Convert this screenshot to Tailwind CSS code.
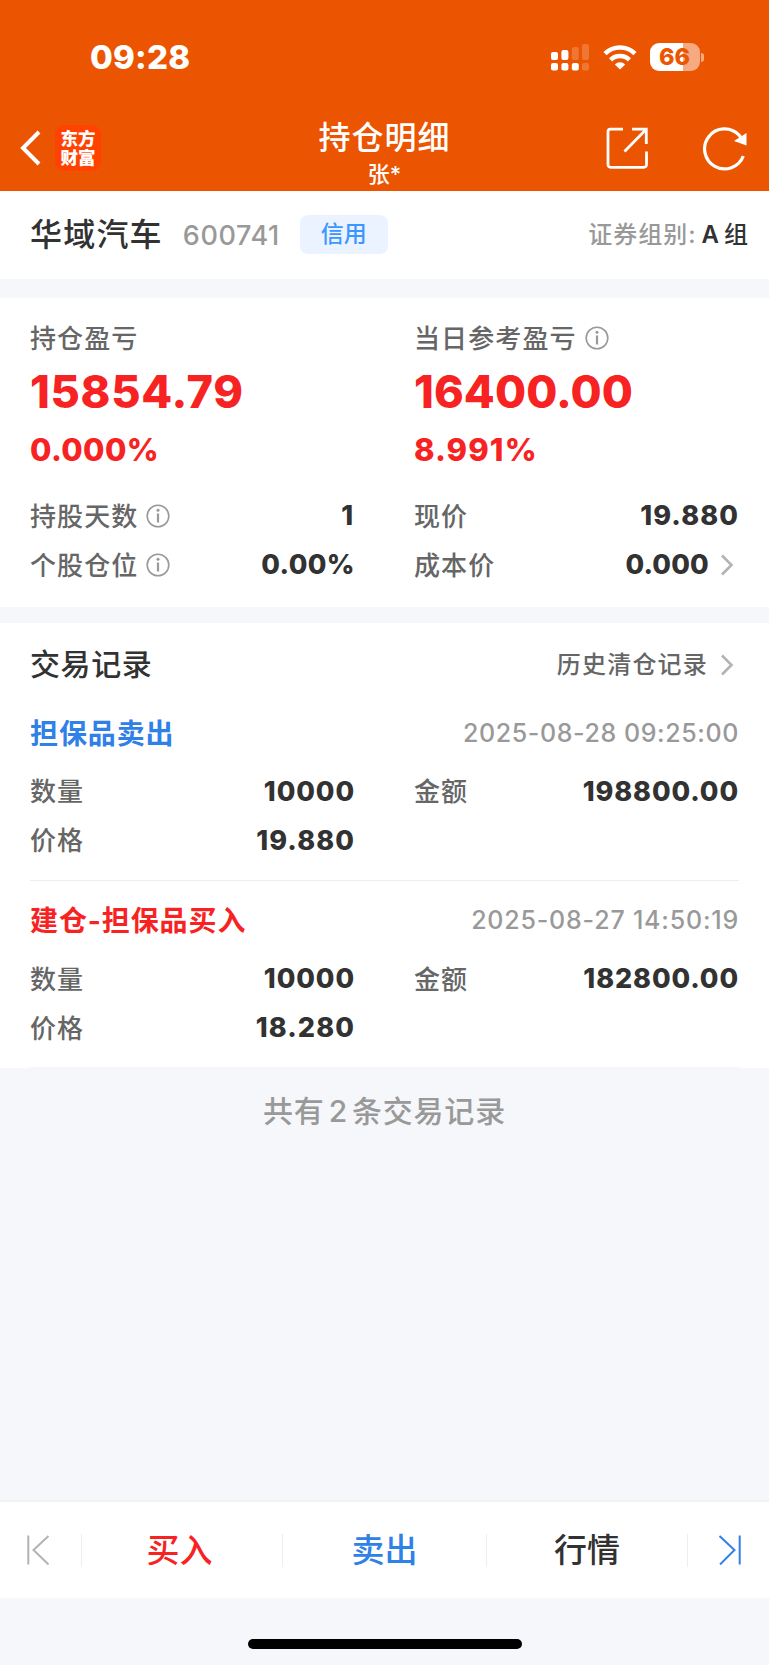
<!DOCTYPE html>
<html lang="zh-CN">
<head>
  <meta charset="UTF-8" />
  <meta name="viewport" content="width=device-width, initial-scale=1.0" />
  <title>持仓明细</title>
  <script src="https://cdn.jsdelivr.net/npm/@tailwindcss/browser@4"></script>
</head>
<body class="flex flex-col h-[1665px] w-[769px] overflow-hidden bg-[#f6f7fa] text-[#323232] font-['Inter','Noto_Sans_CJK_SC',sans-serif]">
  <!-- Header -->
  <header class="h-[191px] shrink-0 bg-[#eb5502] text-white">
    <div class="flex h-[114px] items-center justify-between pl-[90px] pr-[65px]">
      <div class="pt-px text-[33px] font-extrabold leading-none tracking-[0.2px]">09:28</div>
      <div class="flex items-center">
        <svg class="w-[38px] h-[28px]" viewBox="0 0 38 28" fill="#fff">
          <rect x="0" y="9" width="7" height="8" rx="2" />
          <rect x="10.4" y="7" width="7" height="10" rx="2" />
          <rect x="20.8" y="4" width="7" height="13" rx="2" opacity=".2" />
          <rect x="31" y="1" width="7" height="16" rx="2" opacity=".2" />
          <rect x="0" y="20" width="7" height="7.5" rx="2" />
          <rect x="10.4" y="20" width="7" height="7.5" rx="2" />
          <rect x="20.8" y="20" width="7" height="7.5" rx="2" />
          <rect x="31" y="20" width="7" height="7.5" rx="2" opacity=".2" />
        </svg>
        <svg class="ml-[14px] w-[34px] h-[26px]" viewBox="0 0 34 26" fill="none" stroke="#fff" stroke-width="4.6">
          <path d="M2 9.6A21.5 21.5 0 0 1 32 9.6" />
          <path d="M7.6 15.8A13.5 13.5 0 0 1 26.4 15.8" />
          <path d="M17 25.4l-5.2-5a7.3 7.3 0 0 1 10.4 0z" fill="#fff" stroke="none" />
        </svg>
        <div class="ml-[13px] flex h-[28px] w-[50px] items-center justify-center rounded-[9px] bg-linear-to-r from-white from-66% to-white/50 to-66% pr-px text-[23.5px] font-extrabold leading-none text-[#eb5502]">66</div>
        <div class="ml-[1px] h-[9px] w-[3px] rounded-r-full bg-white/50"></div>
      </div>
    </div>
    <div class="flex h-[77px]">
      <div class="flex w-[240px] items-center pl-[20px] pb-[13px]">
        <svg class="mt-1 w-[21px] h-[36px]" viewBox="0 0 21 36" fill="none" stroke="#fff" stroke-width="4"><path d="M19 2L3 18l16 16" /></svg>
        <div class="ml-[14px] mt-[3px] h-[46px] w-[46px] rounded-[9px] bg-[#ff4200] pt-[3px] text-center text-[17.5px] font-black leading-[19.5px] font-['Noto_Sans_CJK_SC',sans-serif]">东方<br />财富</div>
      </div>
      <div class="flex-1 text-center">
        <div class="pt-[2px] text-[32px] font-medium leading-[44px] tracking-[1px]">持仓明细</div>
        <div class="text-[22px] font-medium leading-[28px]">张*</div>
      </div>
      <div class="flex w-[240px] items-start justify-end pr-[22px] pt-[13px]">
        <svg class="w-[42px] h-[42px]" viewBox="0 0 42 42" fill="none" stroke="#fff" stroke-width="2.8">
          <path d="M17 2.2H4.5a2.5 2.5 0 0 0-2.5 2.5v33.1a2.5 2.5 0 0 0 2.5 2.5h33.5a2.5 2.5 0 0 0 2.5-2.5V24.5M26 2.2h14.3V17M40 2.5L18.5 24.5" />
        </svg>
        <svg class="ml-[55px] w-[44px] h-[44px]" viewBox="0 0 44 44" fill="none" stroke="#fff" stroke-width="3.2">
          <path d="M40.3 29A20 20 0 1 1 36 8L39 12" />
          <path d="M43.5 6v12.500L31 14z" fill="#fff" stroke="none" />
        </svg>
      </div>
    </div>
  </header>

  <!-- Stock -->
  <section class="flex h-[88px] shrink-0 items-center bg-white pl-[30px] pr-[21px]">
    <h1 class="text-[32px] font-medium leading-none tracking-[1.2px]">华域汽车</h1>
    <span class="ml-[20px] text-[27px] font-medium leading-none tracking-[0.6px] text-[#999]">600741</span>
    <span class="ml-[20px] mb-px flex h-[39px] w-[88px] items-center justify-center rounded-[8px] bg-[#eaf3ff] text-[23px] font-medium leading-none text-[#3c96ff]">信用</span>
    <span class="ml-auto text-[24px] font-medium leading-none tracking-[1px] text-[#999]">证券组别:</span>
    <span class="ml-[5px] text-[24px] font-semibold leading-none">A<span class="ml-[5px] font-medium">组</span></span>
  </section>

  <!-- Profit summary -->
  <section class="mt-[19px] h-[309px] shrink-0 bg-white px-[30px] pt-[15px]">
    <div class="grid grid-cols-[324px_325px] gap-x-[60px] text-[#f72323]">
      <div>
        <div class="flex h-[50px] items-center text-[26px] font-medium tracking-[1.1px] text-[#666]">持仓盈亏</div>
        <div class="flex h-[58px] items-center pb-[2px] text-[45px] font-extrabold leading-none tracking-[0.7px]">15854.79</div>
        <div class="flex h-[56px] items-center text-[31px] font-extrabold leading-none tracking-[0.4px]">0.000%</div>
      </div>
      <div>
        <div class="flex h-[50px] items-center text-[26px] font-medium tracking-[1.1px] text-[#666]">
          当日参考盈亏
          <svg class="ml-[8px] w-[24px] h-[24px]" viewBox="0 0 24 24" fill="none" stroke="#999" stroke-width="1.6"><circle cx="12" cy="12" r="10.8" /><path d="M12 9.5v9" stroke-width="2.2" /><circle cx="12" cy="6.3" r="1.5" fill="#999" stroke="none" /></svg>
        </div>
        <div class="flex h-[58px] items-center pb-[2px] text-[45px] font-extrabold leading-none tracking-[0.1px]">16400.00</div>
        <div class="flex h-[56px] items-center text-[31px] font-extrabold leading-none tracking-[1.1px]">8.991%</div>
      </div>
    </div>
    <div class="mt-[14px] grid grid-cols-[324px_325px] gap-x-[60px] text-[26px] font-medium tracking-[1.1px] text-[#666]">
      <div class="flex h-[49px] items-center pt-px">
        持股天数
        <svg class="ml-[8px] w-[24px] h-[24px]" viewBox="0 0 24 24" fill="none" stroke="#999" stroke-width="1.6"><circle cx="12" cy="12" r="10.8" /><path d="M12 9.5v9" stroke-width="2.2" /><circle cx="12" cy="6.3" r="1.5" fill="#999" stroke="none" /></svg>
        <b class="ml-auto pt-px text-[27px] font-extrabold tracking-[0.9px] text-[#323232]">1</b>
      </div>
      <div class="flex h-[49px] items-center justify-between pt-px">现价<b class="pt-px text-[27px] font-extrabold tracking-[1.1px] text-[#323232]">19.880</b></div>
      <div class="flex h-[49px] items-center pt-px">
        个股仓位
        <svg class="ml-[8px] w-[24px] h-[24px]" viewBox="0 0 24 24" fill="none" stroke="#999" stroke-width="1.6"><circle cx="12" cy="12" r="10.8" /><path d="M12 9.5v9" stroke-width="2.2" /><circle cx="12" cy="6.3" r="1.5" fill="#999" stroke="none" /></svg>
        <b class="ml-auto -mr-px pt-px text-[27px] font-extrabold tracking-[0.4px] text-[#323232]">0.00%</b>
      </div>
      <div class="flex h-[49px] items-center pt-px">
        成本价
        <b class="ml-auto pt-px text-[27px] font-extrabold tracking-[0.2px] text-[#323232]">0.000</b>
        <svg class="ml-[11px] mr-[5px] w-[14px] h-[22px]" viewBox="0 0 14 22" fill="none" stroke="#b3b3b3" stroke-width="2.6"><path d="M2 1.5l9.500 9.500L2 20.500" /></svg>
      </div>
    </div>
  </section>

  <!-- Trade records -->
  <section class="mt-[16px] h-[445px] shrink-0 bg-white px-[30px]">
    <div class="flex h-[70px] items-center pt-[13px]">
      <h2 class="text-[30px] font-medium tracking-[0.6px]">交易记录</h2>
      <span class="ml-auto text-[24px] font-medium tracking-[1.2px] text-[#666]">历史清仓记录</span>
      <svg class="ml-[12px] mr-[5px] w-[14px] h-[22px]" viewBox="0 0 14 22" fill="none" stroke="#b3b3b3" stroke-width="2.6"><path d="M2 1.5l9.500 9.500L2 20.500" /></svg>
    </div>

    <div class="h-[188px] border-b border-[#eee] pt-[14px]">
      <div class="flex h-[52px] items-center justify-between">
        <span class="pt-px text-[28px] font-bold tracking-[0.9px] text-[#2f80e7]">担保品卖出</span>
        <span class="pt-px text-[25px] font-medium tracking-[0.6px] text-[#999]">2025-08-28 09:25:00</span>
      </div>
      <div class="mt-[8px] grid grid-cols-[324px_325px] gap-x-[60px] text-[26px] font-medium tracking-[1.1px] text-[#666]">
        <div class="flex h-[49px] items-center justify-between">数量<b class="-mr-px pt-px text-[27px] font-extrabold tracking-[0.9px] text-[#323232]">10000</b></div>
        <div class="flex h-[49px] items-center justify-between">金额<b class="pt-px text-[27px] font-extrabold tracking-[0.9px] text-[#323232]">198800.00</b></div>
        <div class="flex h-[49px] items-center justify-between">价格<b class="-mr-px pt-px text-[27px] font-extrabold tracking-[1.1px] text-[#323232]">19.880</b></div>
      </div>
    </div>

    <div class="h-[187px] border-b border-[#f6f7fa] pt-[14px]">
      <div class="flex h-[52px] items-center justify-between">
        <span class="text-[28px] font-bold tracking-[0.9px] text-[#f72323]">建仓-担保品买入</span>
        <span class="text-[25px] font-medium tracking-[0.8px] text-[#999]">2025-08-27 14:50:19</span>
      </div>
      <div class="mt-[8px] grid grid-cols-[324px_325px] gap-x-[60px] text-[26px] font-medium tracking-[1.1px] text-[#666]">
        <div class="flex h-[49px] items-center justify-between">数量<b class="-mr-px text-[27px] font-extrabold tracking-[0.9px] text-[#323232]">10000</b></div>
        <div class="flex h-[49px] items-center justify-between">金额<b class="text-[27px] font-extrabold tracking-[0.9px] text-[#323232]">182800.00</b></div>
        <div class="flex h-[49px] items-center justify-between">价格<b class="-mr-px text-[27px] font-extrabold tracking-[1.1px] text-[#323232]">18.280</b></div>
      </div>
    </div>
  </section>
  <p class="pt-[21px] text-center text-[30px] font-medium leading-[44px] tracking-[0.8px] text-[#999]">共有<span class="mx-[4px]">2</span>条交易记录</p>

  <!-- Bottom bar -->
  <nav class="mt-auto flex h-[98px] shrink-0 items-center border-t-2 border-[#f1f2f4] bg-white text-[33px] font-medium">
    <div class="flex w-[81px] pl-[26px]">
      <svg class="w-[24px] h-[30px]" viewBox="0 0 24 30" fill="none" stroke="#b3b3b3" stroke-width="2"><path d="M2.3 .5v29M22.5 1L7.5 15l15 14.500" /></svg>
    </div>
    <div class="h-[33px] w-px bg-[#eee]"></div>
    <div class="w-[200px] pt-px pr-[5px] text-center text-[#f72323]">买入</div>
    <div class="h-[33px] w-px bg-[#eee]"></div>
    <div class="w-[203px] pt-px text-center text-[#2f80e7]">卖出</div>
    <div class="h-[33px] w-px bg-[#eee]"></div>
    <div class="w-[200px] pt-px text-center">行情</div>
    <div class="h-[33px] w-px bg-[#eee]"></div>
    <div class="flex w-[81px] justify-end pr-[27px]">
      <svg class="w-[24px] h-[30px]" viewBox="0 0 24 30" fill="none" stroke="#2f80e7" stroke-width="2"><path d="M21.7 .5v29M1.5 1l15 14L2 29.500" /></svg>
    </div>
  </nav>
  <div class="flex h-[67px] shrink-0 justify-center pt-[41px]">
    <div class="h-[10px] w-[274px] rounded-full bg-black"></div>
  </div>
</body>
</html>
